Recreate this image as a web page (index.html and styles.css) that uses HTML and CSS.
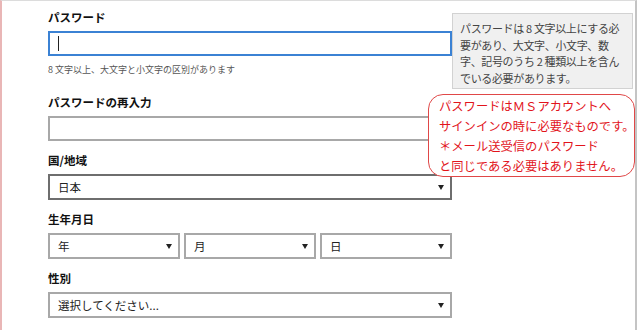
FILE: index.html
```html
<!DOCTYPE html>
<html lang="ja">
<head>
  <meta charset="UTF-8" />
  <meta name="viewport" content="width=device-width, initial-scale=1.0" />
  <title>アカウントの作成</title>
  <link rel="stylesheet" href="styles.css">
</head>
<body>
  <div class="page">
    <form class="signup">
      <div class="group">
        <div class="label">パスワード</div>
        <div class="field focused"><span class="caret"></span></div>
        <div class="hint">8 文字以上、大文字と小文字の区別があります</div>
      </div>

      <div class="group first-gap">
        <div class="label">パスワードの再入力</div>
        <div class="field"></div>
      </div>

      <div class="group">
        <div class="label">国/地域</div>
        <div class="field select dark">日本</div>
      </div>

      <div class="group">
        <div class="label">生年月日</div>
        <div class="date-row">
          <div class="field select">年</div>
          <div class="field select">月</div>
          <div class="field select">日</div>
        </div>
      </div>

      <div class="group">
        <div class="label">性別</div>
        <div class="field select">選択してください...</div>
      </div>
    </form>

    <div class="tooltip">パスワードは 8 文字以上にする必<br>要があり、大文字、小文字、数<br>字、記号のうち 2 種類以上を含ん<br>でいる必要があります。</div>

    <div class="note">パスワードはＭＳアカウントへ<br>サインインの時に必要なものです。<br>＊メール送受信のパスワード<br>と同じである必要はありません。</div>
  </div>
</body>
</html>
```

FILE: styles.css
```css
* {
  box-sizing: border-box;
}

body {
  margin: 0;
  font-family: "Noto Sans CJK JP", "Noto Sans", sans-serif;
  color: #222;
  background: #fff;
}

.page {
  position: relative;
  width: 637px;
  height: 330px;
  border-left: 2px solid #e9b6b6;
  border-top: 1px solid #dcdcdc;
  border-right: 2px solid #c4c4c4;
  overflow: hidden;
}

.signup {
  width: 450px;
  padding: 7px 0 0 46px;
}

.group {
  margin-top: 10px;
}

.group:first-child {
  margin-top: 0;
}

.group.first-gap {
  margin-top: 16px;
}

.label {
  font-size: 11.5px;
  font-weight: bold;
  line-height: 18px;
  height: 18px;
  margin-bottom: 5px;
  color: #111;
}

.field {
  position: relative;
  height: 25px;
  border: 2px solid #a8a8a8;
  background: #fff;
  font-size: 11.5px;
  line-height: 21px;
  padding-left: 8px;
}

.field.focused {
  border-color: #3b82d4;
}

.caret {
  display: inline-block;
  width: 1px;
  height: 15px;
  margin-top: 3px;
  background: #222;
  vertical-align: top;
}

.field.select {
  height: 26px;
  line-height: 22px;
}

.field.dark {
  border-color: #6e6e6e;
}

.field.select::after {
  content: "";
  position: absolute;
  right: 6px;
  top: 9px;
  border-left: 3px solid transparent;
  border-right: 3px solid transparent;
  border-top: 5px solid #222;
}

.hint {
  margin-top: 7px;
  font-size: 9px;
  line-height: 14px;
  color: #555;
}

.date-row {
  display: flex;
  gap: 4px;
}

.date-row .field {
  flex: 1;
}

.tooltip {
  position: absolute;
  left: 450px;
  top: 12px;
  width: 181px;
  height: 76px;
  padding: 6px 0 0 7px;
  background: #f0f0f0;
  border: 1px solid #d2d2d2;
  font-size: 11px;
  line-height: 16.5px;
  letter-spacing: -0.35px;
  color: #444;
  white-space: nowrap;
}

.note {
  position: absolute;
  left: 426px;
  top: 93px;
  width: 207px;
  height: 83px;
  padding: 1px 0 0 10px;
  background: #fff;
  border: 1.5px solid #e04848;
  border-radius: 15px;
  font-size: 12.3px;
  line-height: 20px;
  color: #e2141c;
  white-space: nowrap;
}
```
